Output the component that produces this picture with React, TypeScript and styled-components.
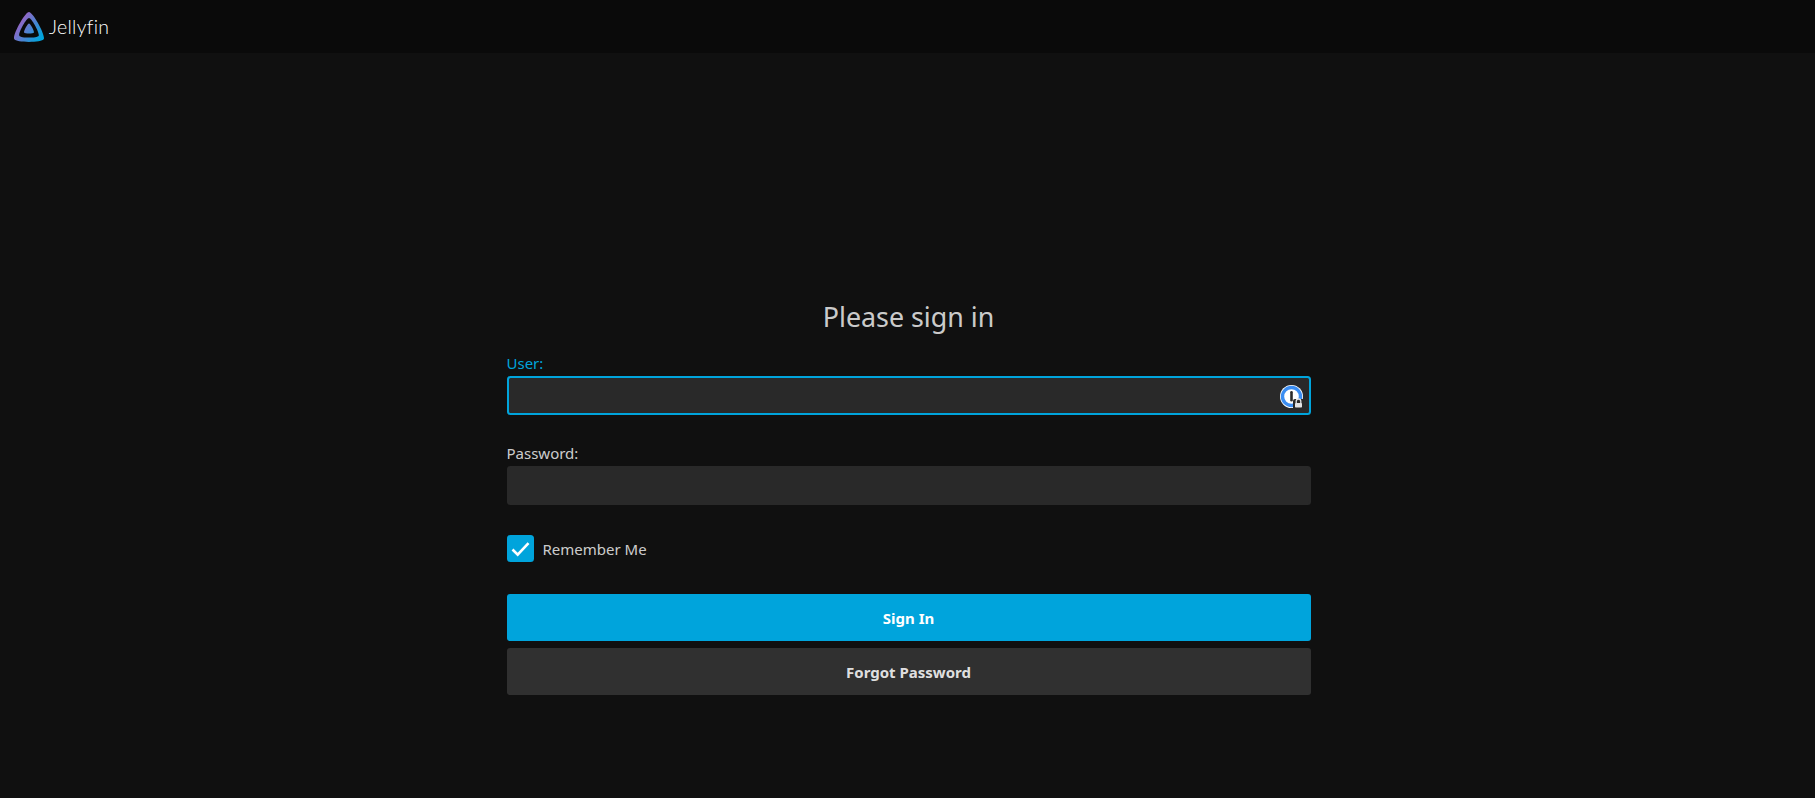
import styled, { createGlobalStyle } from 'styled-components';

const GlobalStyle = createGlobalStyle`
  html, body {
    margin: 0;
    height: 100%;
    background-color: #101010;
  }
  body {
    font-family: 'Noto Sans', 'Liberation Sans', sans-serif;
    color: rgba(255, 255, 255, 0.8);
  }
  * {
    box-sizing: border-box;
  }
`;

const LOGO_PATH =
  'M12 .002C8.826.002-1.398 18.537.16 21.666c1.56 3.129 22.14 3.094 23.682 0C25.384 18.573 15.177 0 12 0zm7.76 18.949c-1.008 2.028-14.493 2.05-15.514 0C3.224 16.9 9.92 4.755 12.003 4.755c2.081 0 8.77 12.166 7.759 14.196zM12 9.198c-1.054 0-4.446 6.15-3.93 7.189.518 1.04 7.348 1.027 7.86 0 .511-1.027-2.874-7.19-3.93-7.19z';

const JellyfinLogo = () => (
  <svg width="30" height="30" viewBox="0 0 24 24" aria-hidden="true">
    <defs>
      <linearGradient id="jf" x1="2" y1="6" x2="22" y2="20" gradientUnits="userSpaceOnUse">
        <stop offset="0" stopColor="#aa5cc3" />
        <stop offset="1" stopColor="#00a4dc" />
      </linearGradient>
    </defs>
    <path d={LOGO_PATH} fill="url(#jf)" />
  </svg>
);

const PasswordManagerIcon = () => (
  <StyledManagerIcon width="24" height="24" viewBox="0 0 24 24" aria-hidden="true">
    <circle cx="11.5" cy="11.5" r="11.5" fill="#fff" />
    <circle cx="11.5" cy="11.5" r="9" fill="none" stroke="#3b8df1" strokeWidth="3.4" />
    <rect x="10.2" y="6" width="2.6" height="10.5" rx="1.3" fill="#2b2b2b" />
    <path d="M13 24v-8a2 2 0 0 1 2-2h9v10z" fill="#292929" />
    <path d="M16.2 18.5v-2.2a2.3 2.3 0 0 1 4.6 0v2.2" fill="none" stroke="#e4e4e4" strokeWidth="1.3" />
    <rect x="15" y="18" width="7" height="4.6" rx="0.8" fill="#e4e4e4" />
  </StyledManagerIcon>
);

const App = () => {
  return (
    <>
      <GlobalStyle />
      <StyledHeader>
        <JellyfinLogo />
        <StyledBrand>Jellyfin</StyledBrand>
      </StyledHeader>
      <StyledMain>
        <StyledForm onSubmit={(e) => e.preventDefault()}>
          <StyledTitle>Please sign in</StyledTitle>
          <StyledField>
            <StyledLabel htmlFor="user" $focused>
              User:
            </StyledLabel>
            <StyledInputWrapper>
              <StyledInput id="user" type="text" $focused />
              <PasswordManagerIcon />
            </StyledInputWrapper>
          </StyledField>
          <StyledField>
            <StyledLabel htmlFor="password">Password:</StyledLabel>
            <StyledInputWrapper>
              <StyledInput id="password" type="password" />
            </StyledInputWrapper>
          </StyledField>
          <StyledRemember>
            <StyledCheckbox>
              <svg width="21" height="21" viewBox="0 0 21 21" aria-hidden="true">
                <path d="M2.5 11.5l5.2 5.2L18.5 5.2" fill="none" stroke="#fff" strokeWidth="2.6" />
              </svg>
            </StyledCheckbox>
            <span>Remember Me</span>
          </StyledRemember>
          <StyledButton type="submit" $primary>
            Sign In
          </StyledButton>
          <StyledButton type="button">Forgot Password</StyledButton>
        </StyledForm>
      </StyledMain>
    </>
  );
};

const StyledHeader = styled.header`
  display: flex;
  align-items: center;
  height: 53px;
  padding: 0 0 0 14px;
  background-color: #0a0a0a;
`;
const StyledBrand = styled.span`
  margin-left: 5px;
  font-family: 'Lato', sans-serif;
  font-weight: 300;
  font-size: 19.5px;
  letter-spacing: 0.3px;
  font-variant-ligatures: none;
  color: #fff;
`;
const StyledMain = styled.main`
  display: flex;
  justify-content: center;
  padding-top: 244px;
`;
const StyledForm = styled.form`
  width: 804px;
  margin-left: 2px;
`;
const StyledTitle = styled.h1`
  margin: 0 0 16px;
  font-size: 26.8px;
  line-height: 40px;
  font-weight: 400;
  text-align: center;
  color: rgba(255, 255, 255, 0.8);
`;
const StyledField = styled.div`
  margin-bottom: 28px;
`;
const StyledLabel = styled.label<{ $focused?: boolean }>`
  display: block;
  font-size: 15px;
  line-height: 20px;
  margin-bottom: 3px;
  color: ${(p) => (p.$focused ? '#00a4dc' : 'rgba(255, 255, 255, 0.8)')};
`;
const StyledInputWrapper = styled.div`
  position: relative;
`;
const StyledInput = styled.input<{ $focused?: boolean }>`
  display: block;
  width: 100%;
  height: 39px;
  padding: 0 8px;
  border: 2px solid ${(p) => (p.$focused ? '#00a4dc' : '#292929')};
  border-radius: 3.5px;
  background-color: #292929;
  color: inherit;
  font: inherit;
  outline: none;
`;
const StyledManagerIcon = styled.svg`
  position: absolute;
  top: 9px;
  right: 7px;
`;
const StyledRemember = styled.div`
  display: flex;
  align-items: center;
  gap: 9px;
  margin: 30px 0 32px;
  font-size: 15px;
  color: rgba(255, 255, 255, 0.8);
`;
const StyledCheckbox = styled.span`
  display: flex;
  align-items: center;
  justify-content: center;
  width: 27px;
  height: 27px;
  border-radius: 3.5px;
  background-color: #00a4dc;
`;
const StyledButton = styled.button<{ $primary?: boolean }>`
  display: block;
  width: 100%;
  height: 47px;
  margin-bottom: 7px;
  border: none;
  border-radius: 3px;
  background-color: ${(p) => (p.$primary ? '#00a4dc' : '#303030')};
  color: ${(p) => (p.$primary ? '#fff' : 'rgba(255, 255, 255, 0.87)')};
  font-family: inherit;
  font-size: 15px;
  font-weight: 700;
  cursor: pointer;
`;

export default App;
